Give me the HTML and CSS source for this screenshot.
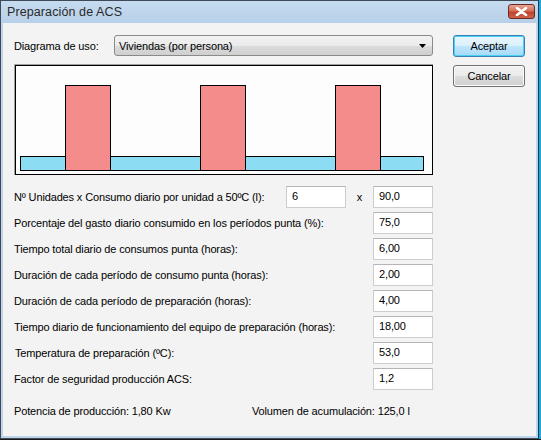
FILE: index.html
```html
<!DOCTYPE html>
<html lang="es">
<head>
<meta charset="utf-8">
<title>Preparación de ACS</title>
<link rel="stylesheet" href="styles.css">
</head>
<body>
<div class="window">
  <div class="titlebar">
    <span class="title">Preparación de ACS</span>
    <button class="close" aria-label="Cerrar">
      <svg width="13" height="9" viewBox="0 0 13 9"><path d="M2 1 L11 8 M11 1 L2 8" stroke="#fff" stroke-width="2.6" stroke-linecap="round"/><path d="M2 1 L11 8 M11 1 L2 8" stroke="#fff" stroke-width="1.4" stroke-linecap="round"/></svg>
    </button>
  </div>
  <div class="client">
    <div class="top">
      <div class="left">
        <div class="usage">
          <span class="usage-label">Diagrama de uso:</span>
          <div class="select">
            <span>Viviendas (por persona)</span>
            <svg class="arrow" width="7" height="4" viewBox="0 0 7 4"><path d="M0 0 H7 L3.5 4 Z" fill="#000"/></svg>
          </div>
        </div>
        <svg class="diagram" width="419" height="111" viewBox="0 0 419 111">
          <rect x="0" y="0" width="419" height="111" fill="#f3f3f3"/>
          <path d="M0.5 111 V0.5 H419" stroke="#a0a0a0" fill="none"/>
          <rect x="1.5" y="1.5" width="417" height="109" fill="#fdfdfd" stroke="#000"/>
          <rect x="6.5" y="92.5" width="403" height="14" fill="#8cdcf4" stroke="#000"/>
          <rect x="51.5" y="21.5" width="45" height="85" fill="#f48c8c" stroke="#000"/>
          <rect x="186.5" y="21.5" width="45" height="85" fill="#f48c8c" stroke="#000"/>
          <rect x="321.5" y="21.5" width="45" height="85" fill="#f48c8c" stroke="#000"/>
        </svg>
      </div>
      <div class="buttons">
        <button class="btn default">Aceptar</button>
        <button class="btn">Cancelar</button>
      </div>
    </div>

    <div class="rows">
      <div class="row">
        <span class="label">Nº Unidades x Consumo diario por unidad a 50ºC (l):</span>
        <div class="field f1">6</div>
        <span class="times">x</span>
        <div class="field f2">90,0</div>
      </div>
      <div class="row">
        <span class="label">Porcentaje del gasto diario consumido en los períodos punta (%):</span>
        <div class="field f2">75,0</div>
      </div>
      <div class="row">
        <span class="label">Tiempo total diario de consumos punta (horas):</span>
        <div class="field f2">6,00</div>
      </div>
      <div class="row">
        <span class="label">Duración de cada período de consumo punta (horas):</span>
        <div class="field f2">2,00</div>
      </div>
      <div class="row">
        <span class="label">Duración de cada período de preparación (horas):</span>
        <div class="field f2">4,00</div>
      </div>
      <div class="row">
        <span class="label">Tiempo diario de funcionamiento del equipo de preparación (horas):</span>
        <div class="field f2">18,00</div>
      </div>
      <div class="row">
        <span class="label indent">Temperatura de preparación (ºC):</span>
        <div class="field f2">53,0</div>
      </div>
      <div class="row">
        <span class="label">Factor de seguridad producción ACS:</span>
        <div class="field f2">1,2</div>
      </div>
    </div>

    <div class="results">
      <span class="res1">Potencia de producción: 1,80 Kw</span>
      <span class="res2">Volumen de acumulación: 125,0 l</span>
    </div>
  </div>
</div>
</body>
</html>
```
FILE: styles.css
```css
html, body {
  margin: 0;
  padding: 0;
}
body {
  width: 541px;
  height: 440px;
  background: #1a1a1a;
  font-family: "Liberation Sans", Arial, sans-serif;
  font-size: 11px;
  letter-spacing: -0.14px;
  color: #000;
  overflow: hidden;
}
.window {
  box-sizing: border-box;
  width: 539px;
  height: 439px;
  border: 1px solid #3e4a58;
  background: #bed5ec;
  border-right: 1px solid #2b3440;
  box-shadow: 2px 0 0 #19a8e2;
  display: flex;
  flex-direction: column;
}
.titlebar {
  height: 22px;
  display: flex;
  align-items: center;
  justify-content: space-between;
  padding: 0 3px 0 6px;
  background: linear-gradient(#c6dbef, #b7cfe8);
}
.title {
  font-size: 12.5px;
  color: #2a2a2a;
  letter-spacing: 0.1px;
}
.close {
  width: 27px;
  height: 15px;
  margin-top: -2px;
  padding: 0;
  border: 1px solid #6a2a22;
  border-radius: 3px;
  background: linear-gradient(#e8a493 0%, #d4705a 45%, #c1412b 55%, #d0634d 100%);
  display: flex;
  align-items: center;
  justify-content: center;
}
.client {
  flex: 1;
  margin: 0 2px 2px 2px;
  background: #f3f3f3;
  padding: 12px 0 0 11px;
}
.top {
  display: grid;
  grid-template-columns: 419px 72px;
  column-gap: 20px;
}
.usage {
  display: flex;
  align-items: center;
  height: 21px;
}
.usage-label {
  width: 100px;
}
.select {
  box-sizing: border-box;
  width: 319px;
  height: 21px;
  border: 1px solid #8a8a8a;
  border-radius: 3px;
  background: linear-gradient(#f2f2f2 0%, #ebebeb 50%, #dddddd 51%, #cfcfcf 100%);
  display: flex;
  align-items: center;
  justify-content: space-between;
  padding: 0 5px 0 4px;
}
.arrow {
  margin-right: 1px;
}
.diagram {
  display: block;
  margin-top: 8px;
}
.buttons {
  display: flex;
  flex-direction: column;
  gap: 8px;
}
.btn {
  box-sizing: border-box;
  width: 72px;
  height: 22px;
  font-family: inherit;
  font-size: 11px;
  letter-spacing: -0.14px;
  color: #000;
  padding: 0;
  border: 1px solid #707070;
  border-radius: 3px;
  background: linear-gradient(#f2f2f2 0%, #ebebeb 50%, #dddddd 51%, #cfcfcf 100%);
  box-shadow: inset 0 0 0 1px #fbfbfb;
}
.btn.default {
  border-color: #3c7fb1;
  box-shadow: inset 0 0 0 1px #48d2f8;
  background: linear-gradient(#eaf6fd 0%, #d9f0fc 50%, #bee6fd 51%, #a7d9f5 100%);
}
.rows {
  margin-top: 11px;
  display: flex;
  flex-direction: column;
  gap: 4px;
}
.row {
  display: grid;
  grid-template-columns: 272px 60px 27px 60px;
  height: 22px;
  align-items: center;
}
.label {
  grid-column: 1 / 2;
  white-space: nowrap;
  padding-bottom: 1px;
}
.label.indent {
  padding-left: 1px;
}
.field {
  box-sizing: border-box;
  height: 22px;
  background: #fff;
  border: 1px solid #cdcdcd;
  border-top-color: #b5b5b5;
  padding: 3px 0 0 5px;
  line-height: 13px;
}
.f1 {
  grid-column: 2 / 3;
}
.times {
  grid-column: 3 / 4;
  text-align: center;
  padding-bottom: 1px;
}
.f2 {
  grid-column: 4 / 5;
}
.results {
  margin-top: 15px;
  display: flex;
}
.res1 {
  width: 238px;
}
```
